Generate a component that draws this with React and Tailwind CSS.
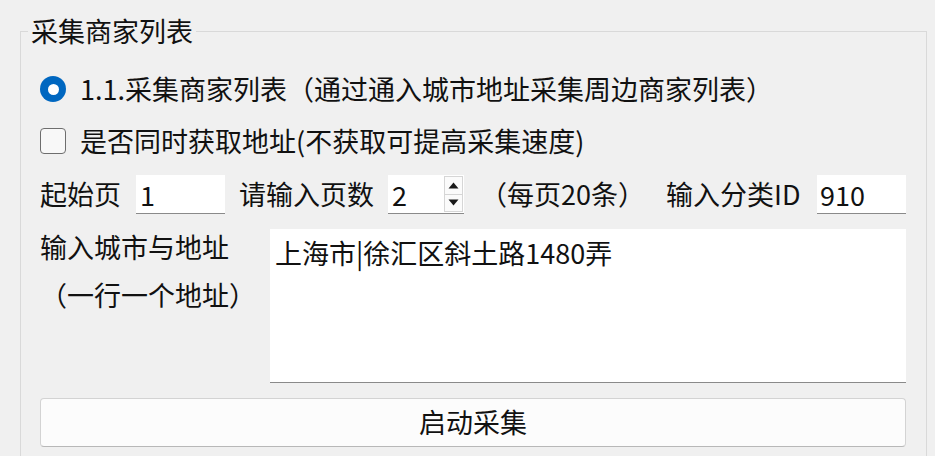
import { useState } from "react";

const font = { fontFamily: '"Noto Sans CJK SC", "Noto Sans", sans-serif' };

function SpinBox({ value }) {
  return (
    <div className="flex h-[39px] w-[76px] items-stretch bg-white border-b border-[#8a8a8a]">
      <span className="flex-1 pl-[4px] leading-[39px]">{value}</span>
      <div className="flex w-[20px] flex-col py-[1px] pr-[1px]">
        <button className="flex h-[19px] items-center justify-center border border-[#d6d6d6] bg-[#fbfbfb]">
          <svg width="11" height="7" viewBox="0 0 11 7">
            <path d="M0.5 6.5 L5.5 0.5 L10.5 6.5 Z" fill="#1a1a1a" />
          </svg>
        </button>
        <button className="flex h-[18px] items-center justify-center border border-t-0 border-[#d6d6d6] bg-[#fbfbfb]">
          <svg width="11" height="7" viewBox="0 0 11 7">
            <path d="M0.5 0.5 L5.5 6.5 L10.5 0.5 Z" fill="#1a1a1a" />
          </svg>
        </button>
      </div>
    </div>
  );
}

export default function App() {
  const [fetchAddr, setFetchAddr] = useState(false);

  return (
    <div
      className="h-[456px] w-[935px] overflow-hidden bg-[#f0f0f0] text-[27px] text-[#111]"
      style={font}
    >
      <fieldset className="ml-[20px] mt-[16px] w-[907px] border border-[#d9d9d9] p-0">
        <legend className="ml-[7px] px-[3px] leading-[30px]">采集商家列表</legend>

        <div className="pl-[19px] pr-[20px] pb-[20px]">
          {/* 单选 */}
          <div className="mt-[23px] flex h-[40px] items-center">
            <span className="flex h-[26px] w-[26px] items-center justify-center rounded-full bg-[#0067c0]">
              <span className="h-[11px] w-[11px] rounded-full bg-white" />
            </span>
            <span className="ml-[14px] leading-[40px]">
              1.1.采集商家列表（通过通入城市地址采集周边商家列表）
            </span>
          </div>

          {/* 复选 */}
          <div
            className="mt-[12px] flex h-[40px] items-center"
            onClick={() => setFetchAddr(!fetchAddr)}
          >
            <span className="h-[26px] w-[26px] rounded-[4px] border border-[#6e6e6e] bg-[#f8f8f8]" />
            <span className="ml-[14px] leading-[40px]">
              是否同时获取地址(不获取可提高采集速度)
            </span>
          </div>

          {/* 页数 */}
          <div className="mt-[14px] flex h-[39px] items-center">
            <span>起始页</span>
            <div className="ml-[15px] h-[39px] w-[89px] border-b border-[#8a8a8a] bg-white pl-[4px] leading-[39px]">
              1
            </div>
            <span className="ml-[14px]">请输入页数</span>
            <div className="ml-[14px]">
              <SpinBox value="2" />
            </div>
            <span className="ml-[16px]">（每页20条）</span>
            <span className="ml-[21px]">输入分类ID</span>
            <div className="ml-auto h-[39px] w-[89px] border-b border-[#8a8a8a] bg-white pl-[3px] leading-[39px]">
              910
            </div>
          </div>

          {/* 地址 */}
          <div className="mt-[15px] flex h-[154px]">
            <div className="w-[230px]">
              <div className="h-[36px] leading-[36px]">输入城市与地址</div>
              <div className="mt-[12px] h-[36px] leading-[36px]">（一行一个地址）</div>
            </div>
            <div className="flex-1 border-b border-[#8a8a8a] bg-white px-[5px] pt-[6px] leading-[36px]">
              上海市|徐汇区斜土路1480弄
            </div>
          </div>

          <button className="mt-[15px] flex h-[49px] w-full items-center justify-center rounded-[4px] border border-[#d3d3d3] border-b-[#b8b8b8] bg-[#fcfcfc]">
            启动采集
          </button>
        </div>
      </fieldset>
    </div>
  );
}
